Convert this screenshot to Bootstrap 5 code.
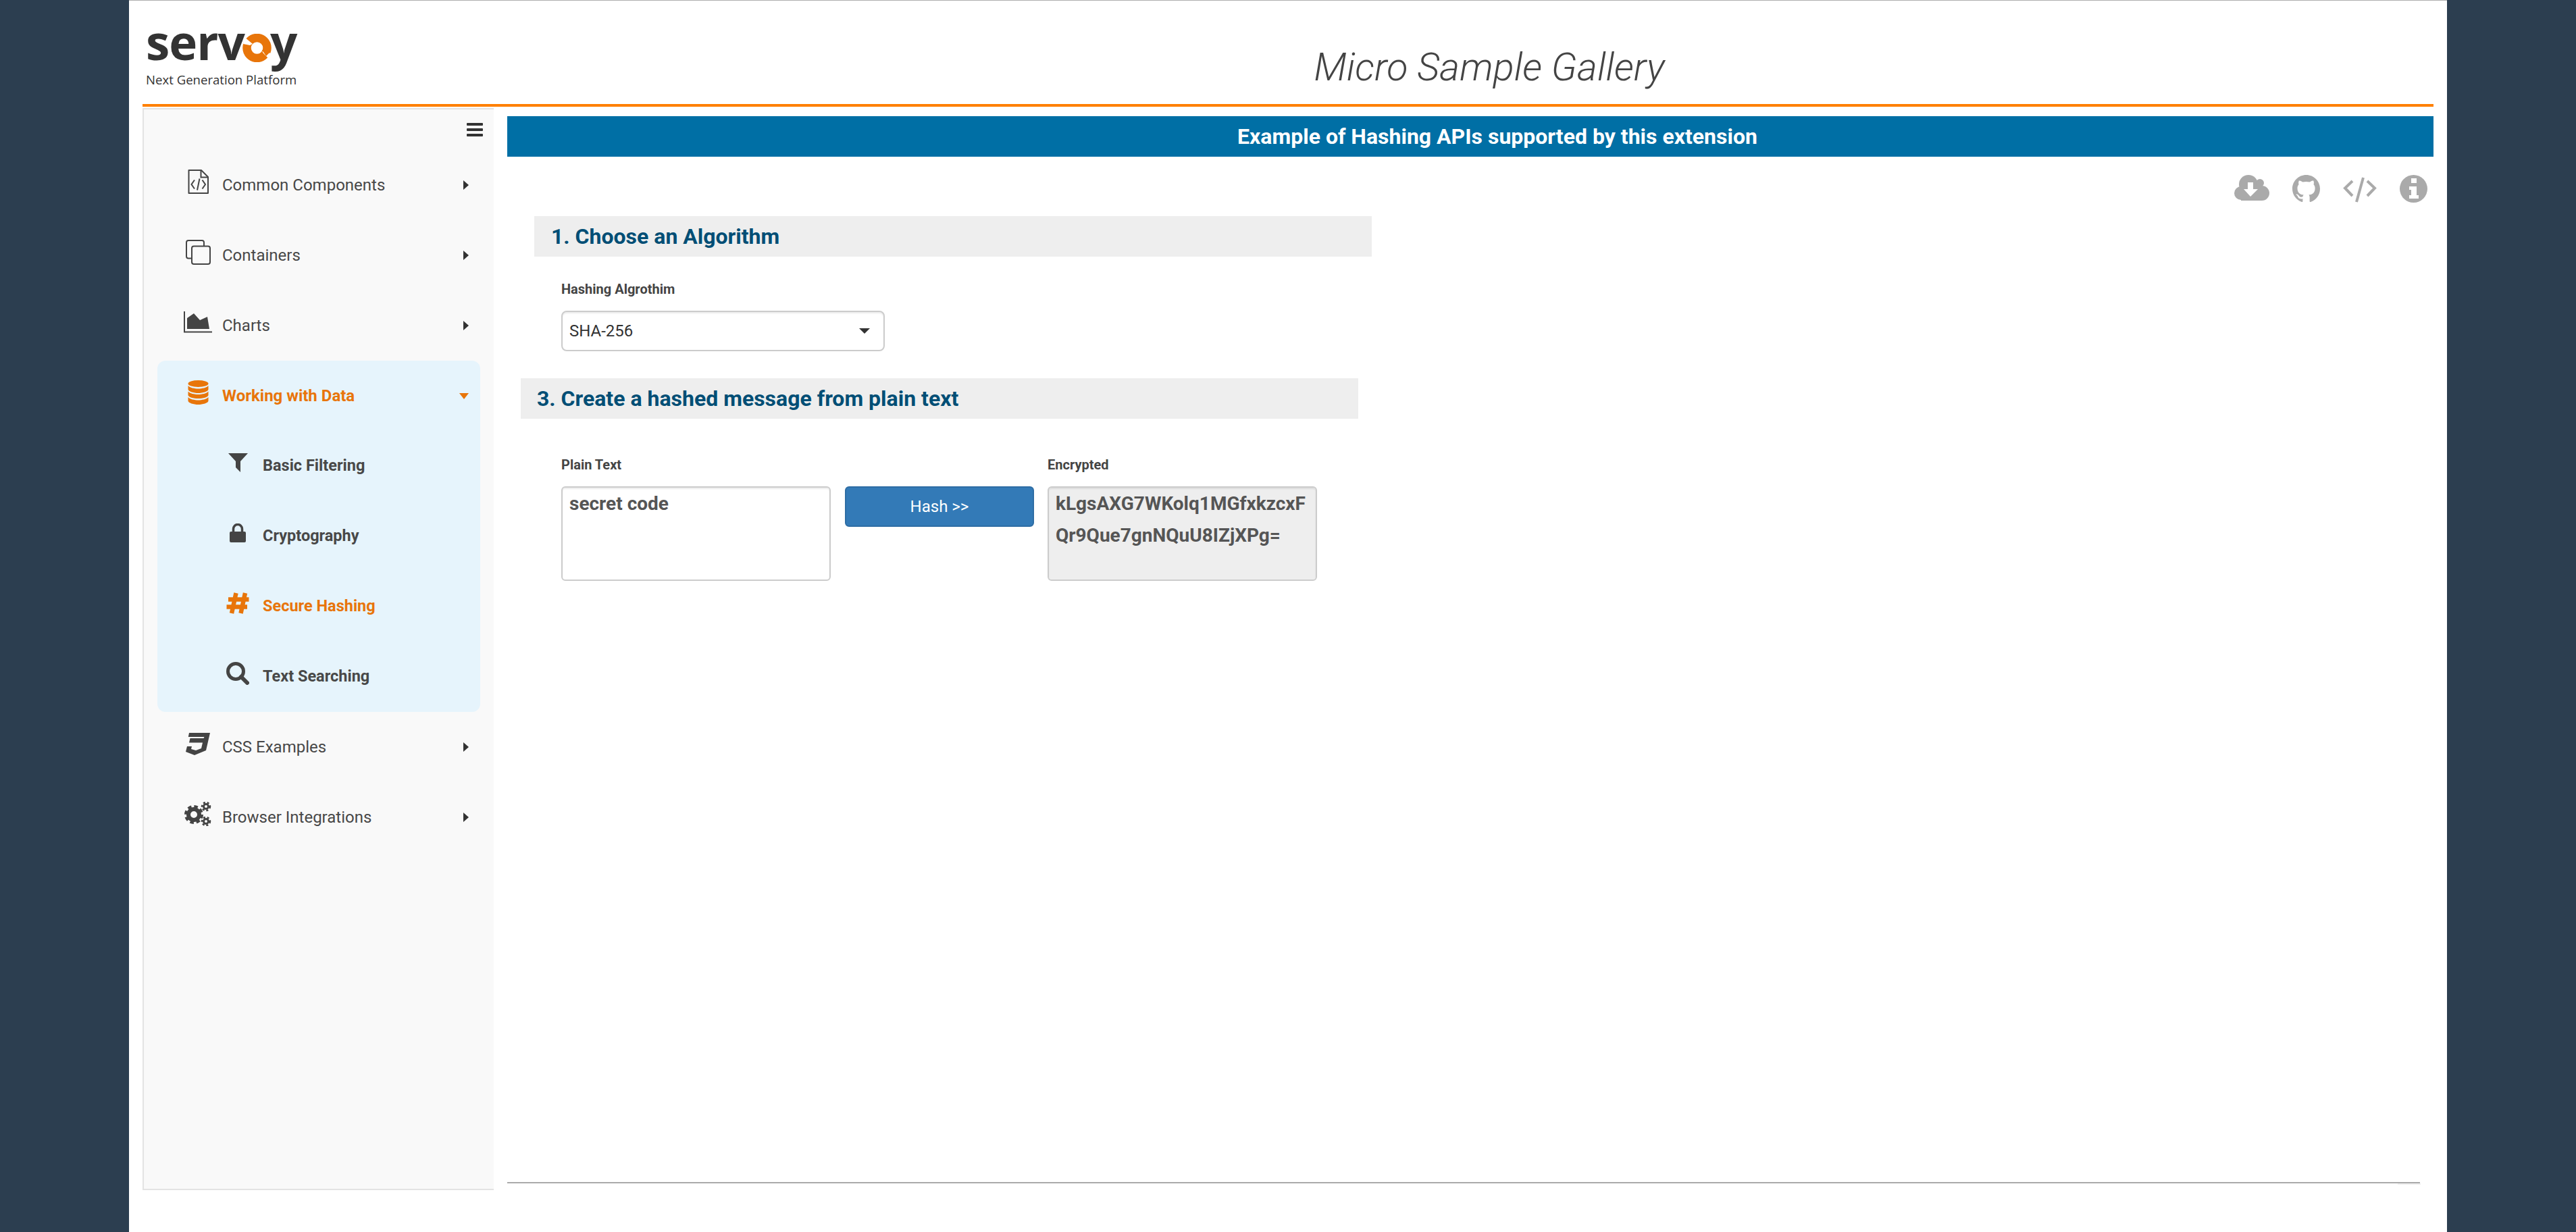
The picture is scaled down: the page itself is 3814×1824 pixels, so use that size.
<!DOCTYPE html>
<html lang="en">
  <head>
    <meta charset="UTF-8" />
    <meta name="viewport" content="width=device-width, initial-scale=1.0" />
    <title>Micro Sample Gallery</title>
    <link
      href="https://cdn.jsdelivr.net/npm/bootstrap@5.3.0/dist/css/bootstrap.min.css"
      rel="stylesheet"
    />
    <style>
      body {
        font-family: "Roboto", sans-serif;
        background-color: #2c3e50;
        color: #444;
      }

      .page-sheet {
        width: 3432px;
        min-height: 1824px;
        margin: 0 auto;
        padding: 0 20px 62px;
        background-color: #fff;
        box-shadow: inset 0 2px 1px -1px #aaa;
      }

      /* Header */
      .top-bar {
        height: 158px;
        border-bottom: 4px solid #ff8000;
      }

      .logo-col {
        width: 596px;
        padding: 30px 0 0 5px;
      }

      .logo-word {
        font-family: "Open Sans", sans-serif;
        font-size: 71px;
        font-weight: 700;
        line-height: 64px;
        letter-spacing: -1px;
        color: #333;
      }

      .logo-word svg {
        width: 43px;
        height: 42px;
        margin: 0 -2px 0 -3px;
        vertical-align: -3px;
      }

      .logo-tag {
        font-family: "Open Sans", sans-serif;
        font-size: 18.6px;
        line-height: 20px;
        margin-top: 14px;
        color: #333;
      }

      .app-title {
        font-size: 57.5px;
        font-weight: 300;
        font-style: italic;
        color: #444;
        padding-top: 57px;
      }

      /* Sidebar */
      .side-panel {
        width: 520px;
        margin-top: 2px;
        background-color: #f9f9f9;
        border-top: 2px solid #e3e3e3;
        border-left: 2px solid #e3e3e3;
        border-bottom: 2px solid #e3e3e3;
      }

      .burger-row {
        height: 60px;
        padding: 20px 16px 0 0;
      }

      .side-item {
        height: 104px;
        margin: 0 20px;
        padding: 0 17px 0 38px;
        font-size: 24px;
        color: #484848;
        gap: 14px;
      }

      .side-item:hover {
        color: #484848;
      }

      .icon-box {
        width: 44px;
        flex: none;
        margin-top: -10px;
      }

      .group-open {
        margin: 0 20px;
        background-color: #e6f4fc;
        border-radius: 12px;
      }

      .group-open .side-item {
        margin: 0;
      }

      .side-head {
        font-weight: 700;
        color: #e8750a;
      }

      .side-head:hover,
      .side-sub.is-current:hover {
        color: #e8750a;
      }

      .side-sub {
        padding-left: 97px;
        gap: 15px;
        font-weight: 700;
        font-size: 23.5px;
      }

      .side-sub.is-current {
        color: #e8750a;
      }

      .arrow-right {
        width: 0;
        height: 0;
        border-top: 7px solid transparent;
        border-bottom: 7px solid transparent;
        border-left: 8px solid #333;
      }

      .arrow-down {
        width: 0;
        height: 0;
        border-left: 7px solid transparent;
        border-right: 7px solid transparent;
        border-top: 9px solid #e8750a;
      }

      /* Content */
      .main-col {
        margin-left: 20px;
      }

      .banner {
        height: 60px;
        margin-top: 14px;
        padding-left: 80px;
        background-color: #006fa5;
        color: #fff;
        font-size: 32px;
        font-weight: 700;
        line-height: 60px;
      }

      .tool-row {
        height: 41px;
        margin-top: 27px;
        padding-right: 9px;
        gap: 34px;
      }

      .step-bar {
        width: 1240px;
        height: 60px;
        padding-left: 25px;
        background-color: #eee;
        color: #004e75;
        font-size: 32px;
        font-weight: 700;
        line-height: 60px;
      }

      .step-one {
        margin: 20px 0 0 40px;
      }

      .step-three {
        margin: 40px 0 0 20px;
        padding-left: 24px;
      }

      .field-label {
        font-size: 20px;
        font-weight: 700;
        line-height: 28px;
        margin: 0;
        color: #444;
      }

      .algo-block {
        margin: 34px 0 0 80px;
      }

      .algo-select {
        width: 479px;
        height: 60px;
        margin-top: 18px;
        padding: 0 40px 0 10px;
        font-size: 24px;
        color: #333;
        border: 2px solid #ccc;
        border-radius: 8px;
        box-shadow: inset 0 2px 2px rgba(0, 0, 0, 0.075);
        background-image: url("data:image/svg+xml,%3Csvg xmlns='http://www.w3.org/2000/svg' viewBox='0 0 16 8'%3E%3Cpath d='M0 0h16L8 8z' fill='%23333'/%3E%3C/svg%3E");
        background-size: 16px 8px;
        background-position: right 20px center;
      }

      .hash-row {
        margin: 54px 0 0 80px;
      }

      .hash-col {
        width: 399px;
      }

      .hash-btn-col {
        width: 280px;
        margin: 0 20px 0 21px;
      }

      .hash-box {
        width: 399px;
        height: 140px;
        margin-top: 18px;
        padding: 0 10px;
        font-size: 28px;
        font-weight: 700;
        line-height: 47px;
        color: #555;
        border: 2px solid #ccc;
        border-radius: 6px;
        box-shadow: inset 0 2px 2px rgba(0, 0, 0, 0.075);
        resize: none;
        overflow: hidden;
      }

      .hash-box[readonly] {
        background-color: #eee;
      }

      .hash-btn {
        width: 280px;
        height: 60px;
        margin-top: 46px;
        font-size: 24px;
        background-color: #337ab7;
        border: 2px solid #2e6da4;
        border-radius: 6px;
      }

      .foot-rule {
        position: relative;
        width: 2832px;
        height: 2px;
        margin-bottom: 10px;
        background-color: #aaa;
      }

      .foot-rule::after {
        content: "";
        position: absolute;
        right: -1px;
        top: 2px;
        width: 34px;
        height: 2px;
        background-color: #eee;
      }
    </style>
  </head>

  <body>
    <div class="page-sheet d-flex flex-column">
      <!-- Header -->
      <header class="top-bar d-flex flex-shrink-0">
        <div class="logo-col flex-shrink-0">
          <div class="logo-word">serv<svg viewBox="0 0 43 42">
              <circle cx="21.500" cy="21" r="15" fill="none" stroke="#e8750a" stroke-width="12.500" />
              <path d="M3 5L15 15L11 17L1 15Z" fill="#fff" />
              <path d="M29 26L43 29L38 36L31 29Z" fill="#fff" />
              <path d="M29 24L41 27L35 33Z" fill="#e8750a" />
            </svg>y</div>
          <div class="logo-tag">Next Generation Platform</div>
        </div>
        <div class="app-title flex-grow-1 text-center">Micro Sample Gallery</div>
      </header>

      <div class="d-flex flex-grow-1">
        <!-- Sidebar -->
        <nav class="side-panel flex-shrink-0">
          <div class="burger-row d-flex justify-content-end">
            <svg width="24" height="20" viewBox="0 0 24 20" fill="#333">
              <rect width="24" height="4" rx="1" />
              <rect y="8" width="24" height="4" rx="1" />
              <rect y="16" width="24" height="4" rx="1" />
            </svg>
          </div>

          <a class="side-item d-flex align-items-center text-decoration-none" href="#">
            <span class="icon-box d-flex justify-content-center">
              <svg width="31" height="36" viewBox="0 0 31 36" fill="none" stroke="#444" stroke-width="2">
                <path d="M1.5 1H20L30 11V35H1.5Z" stroke-linejoin="round" />
                <path d="M19.500 1V11.500H30" />
                <path d="M10 15.500L5.500 22L10 28.500M21.500 15.500L26 22L21.500 28.500M17.500 13.500L14 30.500" />
              </svg>
            </span>
            <span class="flex-grow-1">Common Components</span>
            <span class="arrow-right"></span>
          </a>

          <a class="side-item d-flex align-items-center text-decoration-none" href="#">
            <span class="icon-box d-flex justify-content-center">
              <svg width="37" height="37" viewBox="0 0 37 37" fill="none" stroke="#444" stroke-width="2">
                <path d="M8 27.500H4A3 3 0 0 1 1 24.500V4A3 3 0 0 1 4 1H24A3 3 0 0 1 27 4V9" />
                <rect x="9" y="9.500" width="27" height="26.500" rx="3" />
              </svg>
            </span>
            <span class="flex-grow-1">Containers</span>
            <span class="arrow-right"></span>
          </a>

          <a class="side-item d-flex align-items-center text-decoration-none" href="#">
            <span class="icon-box d-flex justify-content-center">
              <svg width="42" height="32" viewBox="0 0 42 32" fill="#444">
                <path d="M1 0V30.500H42" fill="none" stroke="#444" stroke-width="2" />
                <path d="M5 26V10L15 3L24 13L35 8L38 26Z" />
              </svg>
            </span>
            <span class="flex-grow-1">Charts</span>
            <span class="arrow-right"></span>
          </a>

          <div class="group-open">
            <a class="side-item side-head d-flex align-items-center text-decoration-none" href="#">
              <span class="icon-box d-flex justify-content-center">
                <svg width="31" height="36" viewBox="0 0 31 36" fill="#e8750a">
                  <ellipse cx="15.500" cy="5" rx="15" ry="5" />
                  <path d="M.5 8C3 11 10 12.500 15.500 12.500S28 11 30.500 8V13.500C30.500 16.500 22 19 15.500 19S.5 16.500 .5 13.500Z" />
                  <path d="M.5 16.500C3 19.500 10 21 15.500 21S28 19.500 30.500 16.500V22C30.500 25 22 27 15.500 27S.5 25 .5 22Z" />
                  <path d="M.5 25C3 28 10 29.500 15.500 29.500S28 28 30.500 25V30.500C30.500 33.500 22 36 15.500 36S.5 33.500 .5 30.500Z" />
                </svg>
              </span>
              <span class="flex-grow-1">Working with Data</span>
              <span class="arrow-down"></span>
            </a>

            <a class="side-item side-sub d-flex align-items-center text-decoration-none" href="#">
              <span class="icon-box d-flex justify-content-center">
                <svg width="29" height="28" viewBox="0 0 29 28" fill="#444">
                  <path d="M0 0H29L18 12V28L11 21V12Z" />
                </svg>
              </span>
              <span>Basic Filtering</span>
            </a>

            <a class="side-item side-sub d-flex align-items-center text-decoration-none" href="#">
              <span class="icon-box d-flex justify-content-center">
                <svg width="24" height="28" viewBox="0 0 24 28">
                  <path d="M5.500 13V8A6.500 6.500 0 0 1 18.500 8V13" fill="none" stroke="#444" stroke-width="3.500" />
                  <rect y="12" width="24" height="16" rx="2" fill="#444" />
                </svg>
              </span>
              <span>Cryptography</span>
            </a>

            <a class="side-item side-sub is-current d-flex align-items-center text-decoration-none" href="#">
              <span class="icon-box d-flex justify-content-center">
                <svg width="34" height="32" viewBox="0 0 34 32" fill="none" stroke="#e8750a" stroke-width="6.500">
                  <path d="M14.500 1L8 31M28 1L21.500 31M3 10.500H33.500M.5 21.500H31" />
                </svg>
              </span>
              <span>Secure Hashing</span>
            </a>

            <a class="side-item side-sub d-flex align-items-center text-decoration-none" href="#">
              <span class="icon-box d-flex justify-content-center">
                <svg width="34" height="34" viewBox="0 0 34 34" fill="none" stroke="#444">
                  <circle cx="14" cy="14" r="11.500" stroke-width="5" />
                  <path d="M22 22L31 31" stroke-width="6" stroke-linecap="round" />
                </svg>
              </span>
              <span>Text Searching</span>
            </a>
          </div>

          <a class="side-item d-flex align-items-center text-decoration-none" href="#">
            <span class="icon-box d-flex justify-content-center">
              <svg width="36" height="33" viewBox="0 0 36 33" fill="#444">
                <path d="M5 0H36L30 26L13 33L0 28L2 20H9L8 24L15 26L23 23L25 14.500H5L6.500 8H26.500L27.500 6H3.800Z" />
              </svg>
            </span>
            <span class="flex-grow-1">CSS Examples</span>
            <span class="arrow-right"></span>
          </a>

          <a class="side-item d-flex align-items-center text-decoration-none" href="#">
            <span class="icon-box d-flex justify-content-center">
              <svg width="40" height="36" viewBox="0 0 40 36" fill="none" stroke="#444">
                <circle cx="14" cy="19" r="8" stroke-width="6" />
                <circle cx="14" cy="19" r="12" stroke-width="4" stroke-dasharray="5.500 3.925" />
                <circle cx="32" cy="7" r="3.500" stroke-width="3" />
                <circle cx="32" cy="7" r="6" stroke-width="2.500" stroke-dasharray="3 2.850" />
                <circle cx="32" cy="29" r="3.500" stroke-width="3" />
                <circle cx="32" cy="29" r="6" stroke-width="2.500" stroke-dasharray="3 2.850" />
              </svg>
            </span>
            <span class="flex-grow-1">Browser Integrations</span>
            <span class="arrow-right"></span>
          </a>
        </nav>

        <!-- Main content -->
        <main class="main-col flex-grow-1 d-flex flex-column">
          <div class="banner text-center">Example of Hashing APIs supported by this extension</div>

          <div class="tool-row d-flex justify-content-end">
            <svg width="52" height="38" viewBox="0 0 52 38" fill="#aaa">
              <circle cx="21" cy="14" r="14" />
              <circle cx="38" cy="12" r="6" />
              <circle cx="10" cy="27" r="10" />
              <circle cx="41" cy="27" r="11" />
              <rect x="10" y="17" width="31" height="21" />
              <path d="M20 11H28V21H35L24 32L14 21H20Z" fill="#fff" />
            </svg>
            <svg width="41" height="41" viewBox="0 0 16 16" fill="#aaa">
              <path d="M8 0C3.58 0 0 3.58 0 8c0 3.54 2.29 6.53 5.47 7.59.4.07.55-.17.55-.38 0-.19-.01-.82-.01-1.49-2.01.37-2.53-.49-2.69-.94-.09-.23-.48-.94-.82-1.13-.28-.15-.68-.52-.01-.53.63-.01 1.08.58 1.23.82.72 1.21 1.87.87 2.33.66.07-.52.28-.87.51-1.07-1.78-.2-3.64-.89-3.64-3.95 0-.87.31-1.59.82-2.15-.08-.2-.36-1.02.08-2.12 0 0 .67-.21 2.2.82.64-.18 1.32-.27 2-.27.68 0 1.36.09 2 .27 1.53-1.04 2.2-.82 2.2-.82.44 1.1.16 1.92.08 2.12.51.56.82 1.27.82 2.15 0 3.07-1.87 3.75-3.65 3.95.29.25.54.73.54 1.48 0 1.07-.01 1.93-.01 2.2 0 .21.15.46.55.38A8.013 8.013 0 0016 8c0-4.42-3.58-8-8-8z" />
            </svg>
            <svg width="50" height="41" viewBox="0 0 50 41" fill="none" stroke="#aaa" stroke-width="4">
              <path d="M14 9L3 19.500L14 31M36 9L47 19.500L36 31M30 4L20 40" />
            </svg>
            <svg width="41" height="41" viewBox="0 0 41 41">
              <circle cx="20.500" cy="20.500" r="20.500" fill="#aaa" />
              <path d="M17 5H25V12H17ZM14 17H25V30H28V35H14V30H17V22H14Z" fill="#fff" />
            </svg>
          </div>

          <!-- Step 1 -->
          <div class="step-bar step-one">1. Choose an Algorithm</div>
          <div class="algo-block">
            <label class="field-label d-block" for="algoSelect">Hashing Algrothim</label>
            <select class="form-select algo-select" id="algoSelect">
              <option>SHA-256</option>
              <option>SHA-512</option>
              <option>MD5</option>
            </select>
          </div>

          <!-- Step 3 -->
          <div class="step-bar step-three">3. Create a hashed message from plain text</div>
          <div class="hash-row d-flex">
            <div class="hash-col">
              <label class="field-label d-block" for="plainText">Plain Text</label>
              <textarea class="form-control hash-box" id="plainText">secret code</textarea>
            </div>
            <div class="hash-btn-col">
              <button class="btn btn-primary hash-btn" type="button">Hash &gt;&gt;</button>
            </div>
            <div class="hash-col">
              <label class="field-label d-block" for="encrypted">Encrypted</label>
              <textarea class="form-control hash-box" id="encrypted" readonly>kLgsAXG7WKolq1MGfxkzcxFQr9Que7gnNQuU8IZjXPg=</textarea>
            </div>
          </div>

          <div class="foot-rule mt-auto"></div>
        </main>
      </div>
    </div>

    <script src="https://cdn.jsdelivr.net/npm/bootstrap@5.3.0/dist/js/bootstrap.bundle.min.js"></script>
  </body>
</html>
